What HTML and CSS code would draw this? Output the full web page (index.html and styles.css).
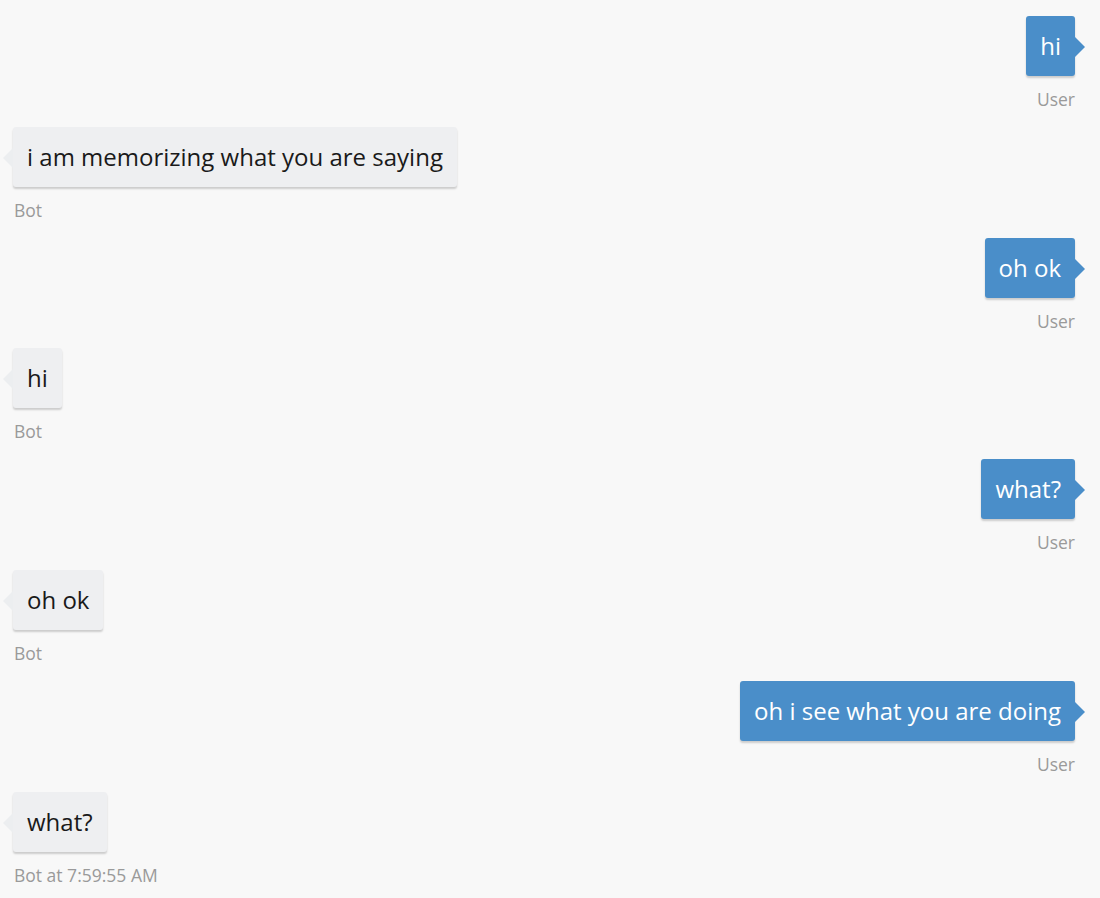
FILE: index.html
```html
<!DOCTYPE html>
<html>
<head>
<meta charset="utf-8">
<link rel="stylesheet" href="styles.css">
</head>
<body>
<div class="chat">
  <div class="msg user"><div class="bubble">hi</div><div class="from">User</div></div>
  <div class="msg bot"><div class="bubble">i am memorizing what you are saying</div><div class="from">Bot</div></div>
  <div class="msg user"><div class="bubble">oh ok</div><div class="from">User</div></div>
  <div class="msg bot"><div class="bubble">hi</div><div class="from">Bot</div></div>
  <div class="msg user"><div class="bubble">what?</div><div class="from">User</div></div>
  <div class="msg bot"><div class="bubble">oh ok</div><div class="from">Bot</div></div>
  <div class="msg user"><div class="bubble">oh i see what you are doing</div><div class="from">User</div></div>
  <div class="msg bot"><div class="bubble">what?</div><div class="from">Bot at 7:59:55 AM</div></div>
</div>
</body>
</html>
```
FILE: styles.css
```css
html, body {
  margin: 0;
  padding: 0;
  background: #f8f8f8;
}
body {
  font-family: "Open Sans", "Noto Sans", sans-serif;
}
.chat {
  display: flex;
  flex-direction: column;
  padding: 16px 25px 0 13px;
}
.msg {
  display: flex;
  flex-direction: column;
  height: 110.8px;
}
.msg.user { align-items: flex-end; }
.msg.bot { align-items: flex-start; }
.bubble {
  position: relative;
  height: 60px;
  line-height: 60px;
  padding: 0 14px;
  font-size: 24px;
  border-radius: 3px;
  box-shadow: 0 2px 2px rgba(0,0,0,0.18);
  box-sizing: border-box;
  white-space: nowrap;
}
.user .bubble {
  background: #4a8ec9;
  color: #fff;
}
.bot .bubble {
  background: #eeeff1;
  color: #1a1a1a;
}
.user .bubble::after {
  content: "";
  position: absolute;
  right: -10px;
  top: 21px;
  border-top: 10px solid transparent;
  border-bottom: 10px solid transparent;
  border-left: 10px solid #4a8ec9;
}
.bot .bubble::after {
  content: "";
  position: absolute;
  left: -10px;
  top: 21px;
  border-top: 10px solid transparent;
  border-bottom: 10px solid transparent;
  border-right: 10px solid #eceef0;
}
.from {
  margin-top: 12px;
  font-size: 17.5px;
  line-height: 22px;
  color: #9a9a9a;
}
.bot .from { padding-left: 1px; }
```
